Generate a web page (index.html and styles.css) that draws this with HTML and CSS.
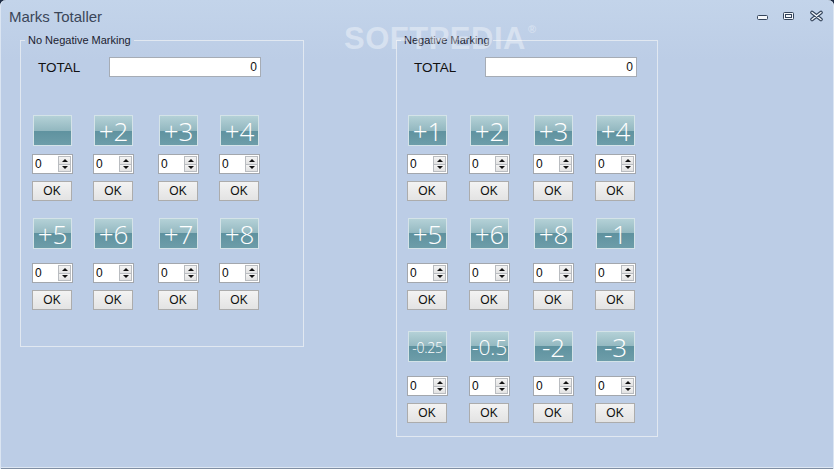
FILE: index.html
```html
<!DOCTYPE html>
<html lang="en">
<head>
    <meta charset="UTF-8">
    <title>Marks Totaller</title>
    <link rel="stylesheet" href="styles.css">
</head>
<body>
<div class="window">
    <div class="titlebar">
        <span class="title">Marks Totaller</span>
        <svg class="controls" width="66" height="14" viewBox="0 0 66 14">
            <rect x="0.5" y="6.5" width="10" height="4" rx="1" fill="#f4f7fb" stroke="#34445b"/>
            <rect x="26.5" y="3.5" width="10" height="7" rx="1" fill="#f4f7fb" stroke="#34445b"/>
            <rect x="28.5" y="5.5" width="6" height="3" fill="none" stroke="#34445b"/>
            <path d="M55 3.5 L64 10.5 M64 3.5 L55 10.5" stroke="#34445b" stroke-width="3.6" stroke-linecap="round"/>
            <path d="M55 3.5 L64 10.5 M64 3.5 L55 10.5" stroke="#f4f7fb" stroke-width="1.4" stroke-linecap="round"/>
        </svg>
    </div>

    <div class="watermark">SOFTPEDIA<span class="reg">®</span></div>

    <div class="groups">
        <fieldset class="group group-left">
            <legend>No Negative Marking</legend>
            <div class="group-body">
                <div class="total-row">
                    <span class="total-label">TOTAL</span>
                    <div class="total-box">0</div>
                </div>
                <div class="tiles">
                    <div class="cell"><div class="tile"></div><div class="spin"><span class="spin-val">0</span><span class="spin-btns"><i class="up"></i><i class="down"></i></span></div><div class="ok">OK</div></div>
                    <div class="cell"><div class="tile">+2</div><div class="spin"><span class="spin-val">0</span><span class="spin-btns"><i class="up"></i><i class="down"></i></span></div><div class="ok">OK</div></div>
                    <div class="cell"><div class="tile">+3</div><div class="spin"><span class="spin-val">0</span><span class="spin-btns"><i class="up"></i><i class="down"></i></span></div><div class="ok">OK</div></div>
                    <div class="cell"><div class="tile">+4</div><div class="spin"><span class="spin-val">0</span><span class="spin-btns"><i class="up"></i><i class="down"></i></span></div><div class="ok">OK</div></div>
                    <div class="cell"><div class="tile">+5</div><div class="spin"><span class="spin-val">0</span><span class="spin-btns"><i class="up"></i><i class="down"></i></span></div><div class="ok">OK</div></div>
                    <div class="cell"><div class="tile">+6</div><div class="spin"><span class="spin-val">0</span><span class="spin-btns"><i class="up"></i><i class="down"></i></span></div><div class="ok">OK</div></div>
                    <div class="cell"><div class="tile">+7</div><div class="spin"><span class="spin-val">0</span><span class="spin-btns"><i class="up"></i><i class="down"></i></span></div><div class="ok">OK</div></div>
                    <div class="cell"><div class="tile">+8</div><div class="spin"><span class="spin-val">0</span><span class="spin-btns"><i class="up"></i><i class="down"></i></span></div><div class="ok">OK</div></div>
                </div>
            </div>
        </fieldset>

        <fieldset class="group group-right">
            <legend>Negative Marking</legend>
            <div class="group-body">
                <div class="total-row">
                    <span class="total-label">TOTAL</span>
                    <div class="total-box">0</div>
                </div>
                <div class="tiles">
                    <div class="cell"><div class="tile">+1</div><div class="spin"><span class="spin-val">0</span><span class="spin-btns"><i class="up"></i><i class="down"></i></span></div><div class="ok">OK</div></div>
                    <div class="cell"><div class="tile">+2</div><div class="spin"><span class="spin-val">0</span><span class="spin-btns"><i class="up"></i><i class="down"></i></span></div><div class="ok">OK</div></div>
                    <div class="cell"><div class="tile">+3</div><div class="spin"><span class="spin-val">0</span><span class="spin-btns"><i class="up"></i><i class="down"></i></span></div><div class="ok">OK</div></div>
                    <div class="cell"><div class="tile">+4</div><div class="spin"><span class="spin-val">0</span><span class="spin-btns"><i class="up"></i><i class="down"></i></span></div><div class="ok">OK</div></div>
                    <div class="cell"><div class="tile">+5</div><div class="spin"><span class="spin-val">0</span><span class="spin-btns"><i class="up"></i><i class="down"></i></span></div><div class="ok">OK</div></div>
                    <div class="cell"><div class="tile">+6</div><div class="spin"><span class="spin-val">0</span><span class="spin-btns"><i class="up"></i><i class="down"></i></span></div><div class="ok">OK</div></div>
                    <div class="cell"><div class="tile">+8</div><div class="spin"><span class="spin-val">0</span><span class="spin-btns"><i class="up"></i><i class="down"></i></span></div><div class="ok">OK</div></div>
                    <div class="cell"><div class="tile">-1</div><div class="spin"><span class="spin-val">0</span><span class="spin-btns"><i class="up"></i><i class="down"></i></span></div><div class="ok">OK</div></div>
                    <div class="cell"><div class="tile tile-xs">-0.25</div><div class="spin"><span class="spin-val">0</span><span class="spin-btns"><i class="up"></i><i class="down"></i></span></div><div class="ok">OK</div></div>
                    <div class="cell"><div class="tile tile-sm">-0.5</div><div class="spin"><span class="spin-val">0</span><span class="spin-btns"><i class="up"></i><i class="down"></i></span></div><div class="ok">OK</div></div>
                    <div class="cell"><div class="tile">-2</div><div class="spin"><span class="spin-val">0</span><span class="spin-btns"><i class="up"></i><i class="down"></i></span></div><div class="ok">OK</div></div>
                    <div class="cell"><div class="tile">-3</div><div class="spin"><span class="spin-val">0</span><span class="spin-btns"><i class="up"></i><i class="down"></i></span></div><div class="ok">OK</div></div>
                </div>
            </div>
        </fieldset>
    </div>
</div>
</body>
</html>
```

FILE: styles.css
```css
body {
    margin: 0;
    padding: 0;
    background-color: #1f2d45;
    font-family: 'Liberation Sans', Arial, sans-serif;
}

.window {
    position: relative;
    width: 834px;
    height: 469px;
    box-sizing: border-box;
    background: linear-gradient(#c3d4ea, #bccde6 60px);
    border-radius: 6px 6px 0 0;
    box-shadow: inset 1px 0 0 #dbe5f2, inset -1px 0 0 #dbe5f2, inset 0 -1px 0 #7f8ea3, inset 0 -2px 0 #dde6f2;
    overflow: hidden;
}

.titlebar {
    display: flex;
    align-items: flex-start;
    height: 34px;
    padding: 0 11px 0 9px;
}

.title {
    font-size: 15px;
    line-height: 18px;
    padding-top: 8px;
    color: #3a4659;
}

.controls {
    margin-left: auto;
    margin-top: 9px;
}

.watermark {
    position: absolute;
    left: 344px;
    top: 21px;
    font-size: 31px;
    font-weight: bold;
    letter-spacing: 0.5px;
    color: rgba(255, 255, 255, 0.38);
}

.watermark .reg {
    font-size: 11px;
    vertical-align: 16px;
    margin-left: 2px;
}

.groups {
    display: flex;
    align-items: flex-start;
    padding-left: 20px;
}

.group {
    margin: 0;
    padding: 10px 0 36px 0;
    border: 1px solid #e1e8f1;
    box-sizing: border-box;
}

.group legend {
    margin-left: 4px;
    padding: 0 3px;
    font-size: 11px;
    line-height: 13px;
    color: #1c2230;
}

.group-left {
    width: 284px;
}

.group-right {
    width: 262px;
    margin-left: 92px;
    padding-bottom: 13px;
}

.group-left .group-body {
    padding-left: 11px;
}

.group-right .group-body {
    padding-left: 10px;
}

.total-row {
    display: flex;
    align-items: center;
}

.total-label {
    width: 71px;
    margin-left: 6px;
    font-size: 13.5px;
    color: #111;
}

.group-right .total-label {
    margin-left: 7px;
}

.total-box {
    width: 152px;
    height: 20px;
    box-sizing: border-box;
    border: 1px solid #a6acb5;
    background: #fff;
    text-align: right;
    padding-right: 3px;
    font-size: 12px;
    line-height: 18px;
    color: #111;
}

.tiles {
    display: grid;
    grid-template-columns: 61px 65px 61px 41px;
    row-gap: 17px;
    margin-top: 38px;
}

.group-right .tiles {
    grid-template-columns: 62px 64px 62px 41px;
}

.group-right .cell:nth-child(n+9) {
    margin-top: 4px;
}

.cell {
    display: flex;
    flex-direction: column;
    align-items: flex-start;
}

.tile {
    width: 39px;
    height: 31px;
    box-sizing: border-box;
    margin-left: 1px;
    margin-bottom: 14px;
    border: 1px solid #d4e3e8;
    background: linear-gradient(#b4d1d7 0%, #93b8c0 50%, #5f929f 50%, #6d9da9 100%);
    color: #fff;
    font-family: 'Open Sans', 'Noto Sans', sans-serif;
    font-weight: 300;
    font-size: 26px;
    line-height: 31px;
    text-align: center;
    white-space: nowrap;
}

.cell:nth-child(-n+4) .tile {
    margin-bottom: 8px;
}

.tile-sm {
    font-size: 21px;
}

.tile-xs {
    font-size: 14px;
    letter-spacing: -0.3px;
}

.spin {
    display: flex;
    width: 41px;
    height: 20px;
    box-sizing: border-box;
    border: 1px solid #a3a7ad;
    background: #fff;
    margin-bottom: 7px;
}

.spin-val {
    flex: 1;
    font-size: 12px;
    line-height: 18px;
    padding-left: 2px;
    color: #0a0a0a;
}

.spin-btns {
    display: flex;
    flex-direction: column;
    width: 13px;
    margin: 1px 1px 1px 0;
}

.spin-btns i {
    flex: 1;
    position: relative;
    border: 1px solid #b9bcc0;
    background: linear-gradient(#f4f4f4, #e2e2e2);
}

.spin-btns i + i {
    border-top: none;
}

.spin-btns i::after {
    content: '';
    position: absolute;
    left: 3px;
    top: 2px;
    border-left: 3px solid transparent;
    border-right: 3px solid transparent;
}

.spin-btns .up::after {
    border-bottom: 3px solid #111;
}

.spin-btns .down::after {
    top: 1px;
    border-top: 3px solid #111;
}

.ok {
    width: 40px;
    height: 20px;
    box-sizing: border-box;
    border: 1px solid #acacac;
    background: linear-gradient(#f3f3f3, #e3e3e3);
    font-size: 12px;
    line-height: 18px;
    text-align: center;
    color: #111;
}
```
